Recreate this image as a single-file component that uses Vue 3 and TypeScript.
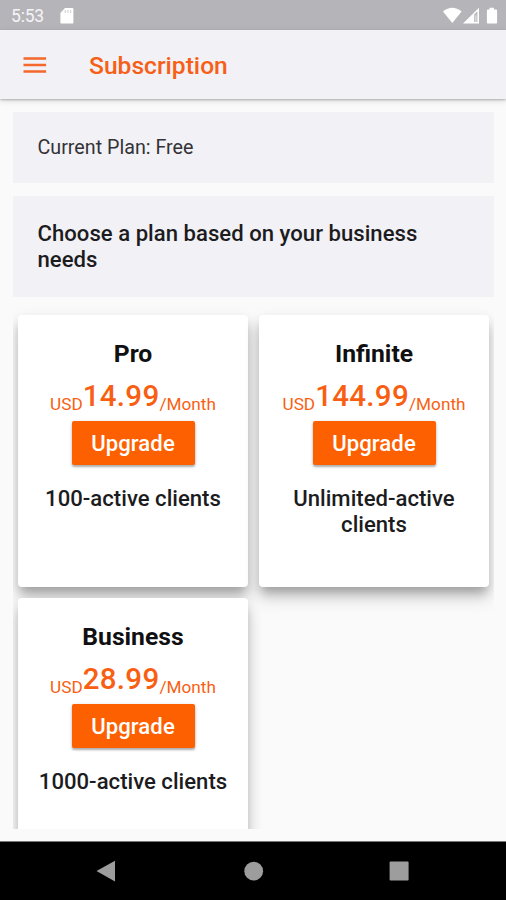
<script setup lang="ts">
interface Plan {
  name: string
  price: string
  clients: string
}

const plans: Plan[] = [
  { name: 'Pro', price: '14.99', clients: '100-active clients' },
  { name: 'Infinite', price: '144.99', clients: 'Unlimited-active clients' },
  { name: 'Business', price: '28.99', clients: '1000-active clients' },
]
</script>

<template>
  <div class="screen">
    <div class="status">
      <span class="clock">5:53</span>
      <svg class="sd" width="14" height="16" viewBox="0 0 14 16">
        <path d="M5 0H12.2Q13.4 0 13.4 1.3V14.4Q13.4 15.6 12.2 15.6H1.6Q.4 15.6 .4 14.4V5Z" fill="#fff" />
        <path d="M5.2 2v3M7.9 2v3M10.6 2v3" stroke="#d5d4d8" stroke-width="1.2" />
      </svg>
      <svg class="signals" width="56" height="18" viewBox="0 0 56 18">
        <path d="M0 4.6Q9.3-2.9 18.6 4.6L9.3 16Z" fill="#fff" />
        <path d="M20 16.6L36 .8V16.6Z" fill="#fff" />
        <path d="M31.2 7.4L34.4 4.2V15H31.2Z" fill="#b5b4b9" />
        <path d="M32.3 8.2h1.2v6.8h-1.2z" fill="#e6e5e9" />
        <path d="M46.5 .8h4.4v1.7h2.2q1 0 1 1V15.6q0 1-1 1h-8.2q-1 0-1-1V3.5q0-1 1-1h1.6z" fill="#fff" />
      </svg>
    </div>
    <header class="bar">
      <svg class="menu" width="24" height="18" viewBox="0 0 24 18">
        <path d="M.5 2.5h22.6M.5 9h22.6M.5 15.4h22.6" stroke="#f4682c" stroke-width="2.5" />
      </svg>
      <h1>Subscription</h1>
    </header>
    <main>
      <section class="current">Current Plan: Free</section>
      <section class="choose">Choose a plan based on your business needs</section>
      <div class="grid">
        <article v-for="plan in plans" :key="plan.name" class="card">
          <h2>{{ plan.name }}</h2>
          <div class="price"><span>USD</span><strong>{{ plan.price }}</strong><span>/Month</span></div>
          <button>Upgrade</button>
          <p>{{ plan.clients }}</p>
        </article>
      </div>
    </main>
    <nav>
      <svg width="506" height="58" viewBox="0 0 506 58">
        <path d="M96.5 29L115 18.8V39.4Z" fill="#9d9d9d" />
        <circle cx="253.7" cy="29.2" r="9.4" fill="#9d9d9d" />
        <rect x="389.6" y="19.6" width="19" height="19" rx="1" fill="#9d9d9d" />
      </svg>
    </nav>
  </div>
</template>

<style>
body {
  margin: 0;
  background: #fafafa;
}
</style>

<style scoped>
.screen {
  width: 506px;
  height: 900px;
  display: flex;
  flex-direction: column;
  overflow: hidden;
  background: #fafafa;
  font-family: Roboto, 'Liberation Sans', sans-serif;
  color: #1c1c1e;
}
.status {
  height: 30px;
  flex: none;
  display: flex;
  align-items: center;
  background: #b5b4b9;
  box-sizing: border-box;
  padding: 2px 8px 0 11px;
}
.clock {
  width: 49px;
  font-size: 17.5px;
  line-height: 20px;
  letter-spacing: -0.2px;
  color: #f5f5f7;
}
.signals {
  margin-left: auto;
  margin-right: -1px;
}
.bar {
  height: 69px;
  flex: none;
  display: flex;
  align-items: center;
  background: #f2f1f6;
  box-shadow: 0 1px 2px rgba(0, 0, 0, 0.24), 0 2px 6px rgba(0, 0, 0, 0.12);
  padding-left: 23px;
  position: relative;
}
.menu {
  margin-right: 42px;
}
h1 {
  margin: 1px 0 0;
  font-size: 24.6px;
  line-height: 29px;
  font-weight: 500;
  color: #f66016;
}
main {
  flex: 1;
  min-height: 0;
  display: flex;
  flex-direction: column;
  padding: 13px 12px 12px 13px;
}
section {
  background: #f2f1f6;
  box-sizing: border-box;
  flex: none;
}
.current {
  height: 71px;
  padding: 24px 24.5px;
  font-size: 19.7px;
  line-height: 24px;
  color: #333336;
}
.choose {
  height: 101px;
  margin-top: 13px;
  padding: 24px 24.5px;
  font-size: 22.1px;
  line-height: 26.4px;
  font-weight: 500;
  letter-spacing: 0.03px;
}
.grid {
  flex: 1;
  min-height: 0;
  overflow: hidden;
  margin-top: 9px;
  padding: 9px 5px 0;
  display: grid;
  grid-template-columns: 230px 230px;
  grid-auto-rows: 272px;
  gap: 11px;
}
.card {
  background: #fff;
  border-radius: 4px;
  box-sizing: border-box;
  padding: 25px 12px 0;
  text-align: center;
  display: flex;
  flex-direction: column;
  align-items: center;
  box-shadow: 0 8px 9px -3px rgba(0, 0, 0, 0.18), 0 12px 16px 0 rgba(0, 0, 0, 0.14), 0 5px 14px 1px rgba(0, 0, 0, 0.1);
}
h2 {
  margin: 0;
  font-size: 24.7px;
  line-height: 28px;
  font-weight: 700;
  color: #101012;
}
.price {
  margin-top: 10px;
  height: 38px;
  display: flex;
  align-items: flex-end;
  color: #f95f12;
}
.price strong {
  font-size: 29.5px;
  line-height: 35px;
  font-weight: 500;
  letter-spacing: 0.3px;
  margin-bottom: 2px;
}
.price span {
  font-size: 17.2px;
  line-height: 20px;
  margin-bottom: 2px;
}
button {
  width: 123px;
  height: 44px;
  margin: 5px 0 0;
  padding: 0;
  border: 0;
  border-radius: 2px;
  background: #fd6000;
  color: #fff;
  font: 500 22.1px/44px Roboto, 'Liberation Sans', sans-serif;
  letter-spacing: 0.1px;
  box-shadow: 0 2px 2px rgba(0, 0, 0, 0.25), 0 1px 4px rgba(0, 0, 0, 0.14);
}
p {
  margin: 20px 0 0;
  font-size: 22.1px;
  line-height: 26px;
  font-weight: 500;
  letter-spacing: 0.02px;
}
nav {
  height: 58px;
  flex: none;
  background: #000;
  border-top: 1px solid #777;
}
nav svg {
  display: block;
}
</style>
